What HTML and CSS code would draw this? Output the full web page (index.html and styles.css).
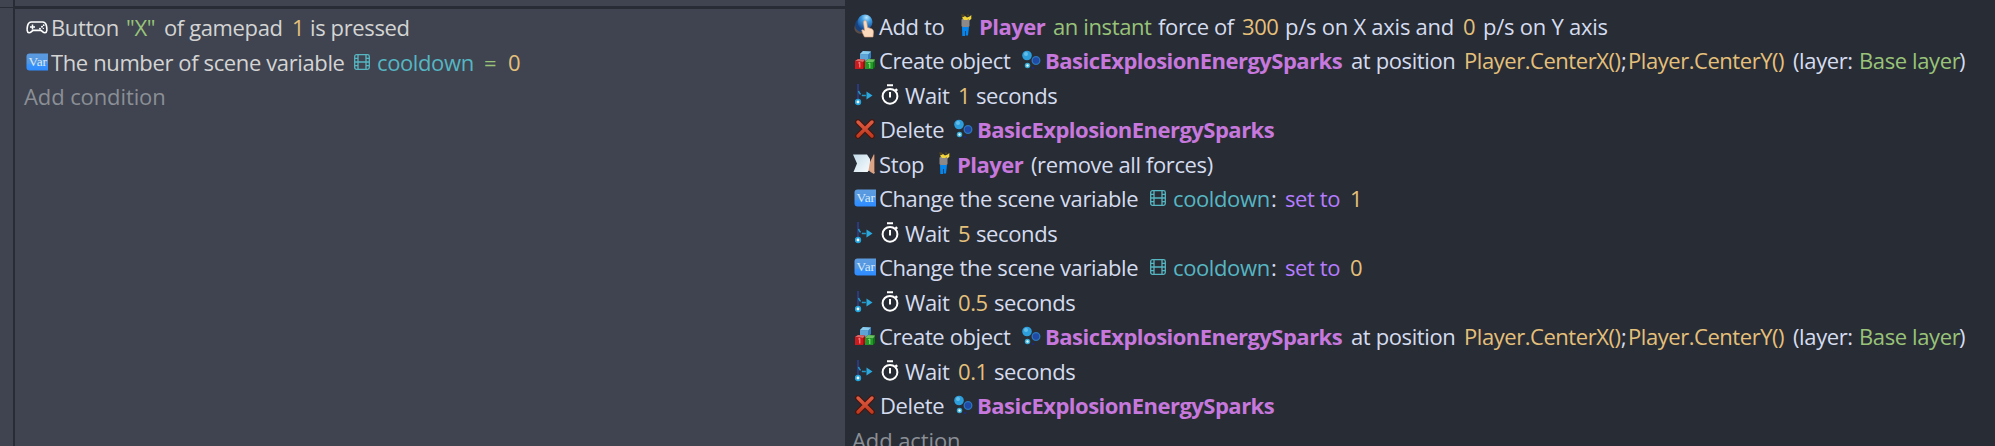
FILE: index.html
```
<!DOCTYPE html>
<html lang="en">
<head>
<meta charset="utf-8">
<title>Events sheet</title>
<link rel="stylesheet" href="styles.css">
</head>
<body>
<svg class="defs" aria-hidden="true">
  <defs>
    <linearGradient id="gVar" x1="0" y1="0" x2="0" y2="1"><stop offset="0" stop-color="#5b9be0"/><stop offset=".58" stop-color="#5296e2"/><stop offset=".65" stop-color="#3a93fa"/><stop offset="1" stop-color="#2f8cff"/></linearGradient>
    <radialGradient id="gBall" cx=".6" cy=".2" r=".8"><stop offset="0" stop-color="#b8e4fa"/><stop offset=".4" stop-color="#3f9be0"/><stop offset="1" stop-color="#154a94"/></radialGradient>
    <linearGradient id="gPage" x1="0" y1="0" x2="1" y2="1"><stop offset="0" stop-color="#c4dcea"/><stop offset="1" stop-color="#f7fbfd"/></linearGradient>
    <linearGradient id="gDel" x1="0" y1="0" x2="0" y2="1"><stop offset="0" stop-color="#dc5c43"/><stop offset="1" stop-color="#c23a20"/></linearGradient>
    <symbol id="pad" viewBox="0 0 22 13"><path d="M5.500 1h11c2.300 0 3.500 1.700 4 4 .6 3 .8 6.500-1.500 6.800-2 .2-2.800-2.400-4.500-2.400h-7c-1.700 0-2.500 2.600-4.500 2.400C.7 11.500.9 8 1.500 5 2 2.700 3.200 1 5.500 1Z" fill="none" stroke="#fff" stroke-width="1.600"/><path d="M6.500 3.500v5M4 6h5" stroke="#fff" stroke-width="1.500"/><circle cx="14" cy="7.700" r="1"/><circle cx="16" cy="5.700" r="1"/><circle cx="17.700" cy="4.200" r=".9"/><circle cx="17.300" cy="7.400" r=".7"/></symbol>
    <symbol id="var" viewBox="0 0 22 18"><path d="M3.500.5H22V17.500H3.500Q.5 17.500.5 14.500V3.500Q.5.5 3.500.5Z" fill="url(#gVar)"/><text x="2.500" y="13" class="var-text" textLength="18.500" lengthAdjust="spacingAndGlyphs">Var</text></symbol>
    <symbol id="film" viewBox="0 0 16 16"><rect x=".7" y=".7" width="14.600" height="14.600" rx="1.800"/><path d="M4 .7v14.600M12 .7v14.600M4 8h8M.7 4.300H4M.7 8H4M.7 11.700H4M12 4.300h3.300M12 8h3.300M12 11.700h3.300"/></symbol>
    <symbol id="touch" viewBox="0 0 20 24"><circle cx="6" cy="14" r="5.700" fill="#785d50" opacity=".65"/><circle cx="8" cy="11" r="7" fill="#17427c"/><circle cx="11" cy="8" r="7.500" fill="url(#gBall)"/><path d="M9.500 8.500q0-2 1.500-2t1.800 2l.7 5 4 1.200q2 .8 2 3L19 23h-8.500l-2-4-.8-3q1-.7 2.800.5Z" fill="#fbd9bd" stroke="#d8a17e" stroke-width=".6"/></symbol>
    <symbol id="cubes" viewBox="0 0 20 19"><path d="m5 3 3-3 8 .5V7l-3 3-8-1Z" fill="#347fb9"/><path d="m5 3 3-3 8 .5-3 3Z" fill="#8bccee"/><path d="m5 3 8 .5V10L5 9Z" fill="#5fa4d6"/><path d="m0 10 3-2 7 .5V16l-2 2H0Z" fill="#a90d12"/><path d="m0 10 3-2 7 .5L8 11Z" fill="#d96a69"/><path d="m0 10 8 1v7H0Z" fill="#c91a1d"/><path d="m3.300 12 1.500-.5v5" stroke="#ff9292" fill="none"/><path d="m10 11 3-3 7 .5V16l-2 2h-8Z" fill="#0b7611"/><path d="m10 11 3-3 7 .5-2 3Z" fill="#6abf63"/><path d="m10 11 8 .5V18h-8Z" fill="#25962a"/><path d="m13.300 12.500 1.500-.5v5" stroke="#8fe782" fill="none"/></symbol>
    <symbol id="async" viewBox="0 0 18 22"><path d="M3 0v15" stroke="#2b397f" stroke-width="2"/><path d="M3.500 7q1.500 4.500 5 4.500h4" fill="none" stroke="#2596c5" stroke-width="1.500" stroke-dasharray="4 1.500"/><path d="m11.500 7.500 6 4-6 4Z" fill="#2aa9de"/><circle cx="3" cy="18" r="2.300" fill="#fff" stroke="#22a4dc" stroke-width="1.800"/></symbol>
    <symbol id="timer" viewBox="0 0 18 21"><circle cx="9" cy="12.300" r="7.400" fill="none" stroke="#fff" stroke-width="2"/><path d="M6 1.200h6M14.500 5l1.800 1.700M9 8v5.500" fill="none" stroke="#fff" stroke-width="2"/></symbol>
    <symbol id="delete" viewBox="0 0 20 20"><path d="m3 3 14 14M17 3 3 17" stroke="#48150e" stroke-width="5.600" stroke-linecap="round"/><path d="m3 3 14 14M17 3 3 17" stroke="url(#gDel)" stroke-width="3.400" stroke-linecap="round"/></symbol>
    <symbol id="stop" viewBox="0 0 23 20"><path d="M0 .5h14l3 4.500v10l-2.500 3H.5L4 9.500Z" fill="url(#gPage)"/><path d="M17 8 21 0l1 3v15l-1 2-3.500-2-2-2Z" fill="#dca487"/><path d="M21.500 1v17" stroke="#80503e"/></symbol>
    <symbol id="player" viewBox="0 0 12 23"><rect x="1.500" y="4.500" width="8" height="8.500" rx="1.500" fill="#8c8988"/><path d="M2 3.500 5 2l2 1.500 2.500-1L11.300 1v4L9 6.500V5L7 6H4Z" fill="#f2d53b"/><path d="M1 .5h3l1 1.500-3 1ZM7 .5h2v1.200H7Z" fill="#54451c"/><path d="M2 13h7l-1 8.500H5.800V17h-.7v5H2.300Z" fill="#0486ee"/></symbol>
    <symbol id="sparks" viewBox="0 0 20 20"><circle cx="6" cy="5.500" r="4.800" fill="#2d9edc"/><circle cx="5" cy="4" r="2" fill="#62bee9"/><circle cx="15" cy="10.500" r="3.800" fill="#2149a6" stroke="#2a77bb" stroke-width="1.300"/><circle cx="6.500" cy="15.500" r="2" fill="#e4ffff" stroke="#37abd7" stroke-width="1.500"/><circle cx="12" cy="18" r="1.300" fill="#202a71"/></symbol>
  </defs>
</svg>
<main class="sheet">
  <aside class="gutter"><div class="gutter-top"></div></aside>
  <section class="conditions">
    <div class="row"><svg class="icon pad"><use href="#pad"/></svg><span class="t button">Button</span><span class="t str x">"X"</span><span class="t of-gamepad">of gamepad</span><span class="t num n1">1</span><span class="t">is pressed</span></div>
    <div class="row"><svg class="icon var"><use href="#var"/></svg><span class="t number-of">The number of scene variable</span><svg class="film"><use href="#film"/></svg><span class="t variable cond-var">cooldown</span><span class="t str eq">=</span><span class="t num">0</span></div>
    <div class="row add"><span class="t">Add condition</span></div>
  </section>
  <section class="actions">
    <div class="row"><svg class="icon touch"><use href="#touch"/></svg><span class="t add-to">Add to</span><svg class="player"><use href="#player"/></svg><span class="t obj player-name">Player</span><span class="t str instant">an instant</span><span class="t force">force of</span><span class="t num n300">300</span><span class="t on-x">p/s on X axis and</span><span class="t num n0">0</span><span class="t on-y">p/s on Y axis</span></div>
    <div class="row"><svg class="icon cubes"><use href="#cubes"/></svg><span class="t create">Create object</span><svg class="sparks"><use href="#sparks"/></svg><span class="t obj sparks-name">BasicExplosionEnergySparks</span><span class="t at">at position</span><span class="t num center">Player.CenterX()</span><span class="t semi">;</span><span class="t num center-y">Player.CenterY()</span><span class="t layer">(layer:</span><span class="t str base">Base layer</span><span class="t">)</span></div>
    <div class="row"><svg class="icon async"><use href="#async"/></svg><svg class="timer"><use href="#timer"/></svg><span class="t wait">Wait</span><span class="t num n1">1</span><span class="t seconds">seconds</span></div>
    <div class="row"><svg class="icon delete"><use href="#delete"/></svg><span class="t del">Delete</span><svg class="sparks"><use href="#sparks"/></svg><span class="t obj sparks-name">BasicExplosionEnergySparks</span></div>
    <div class="row"><svg class="icon stop"><use href="#stop"/></svg><span class="t stop-name">Stop</span><svg class="player"><use href="#player"/></svg><span class="t obj player-name">Player</span><span class="t remove">(remove all forces)</span></div>
    <div class="row"><svg class="icon var"><use href="#var"/></svg><span class="t change">Change the scene variable</span><svg class="film"><use href="#film"/></svg><span class="t variable act-var">cooldown</span><span class="t colon">:</span><span class="t op">set to</span><span class="t num">1</span></div>
    <div class="row"><svg class="icon async"><use href="#async"/></svg><svg class="timer"><use href="#timer"/></svg><span class="t wait">Wait</span><span class="t num n1">5</span><span class="t seconds">seconds</span></div>
    <div class="row"><svg class="icon var"><use href="#var"/></svg><span class="t change">Change the scene variable</span><svg class="film"><use href="#film"/></svg><span class="t variable act-var">cooldown</span><span class="t colon">:</span><span class="t op">set to</span><span class="t num">0</span></div>
    <div class="row"><svg class="icon async"><use href="#async"/></svg><svg class="timer"><use href="#timer"/></svg><span class="t wait">Wait</span><span class="t num decimal">0.5</span><span class="t seconds">seconds</span></div>
    <div class="row"><svg class="icon cubes"><use href="#cubes"/></svg><span class="t create">Create object</span><svg class="sparks"><use href="#sparks"/></svg><span class="t obj sparks-name">BasicExplosionEnergySparks</span><span class="t at">at position</span><span class="t num center">Player.CenterX()</span><span class="t semi">;</span><span class="t num center-y">Player.CenterY()</span><span class="t layer">(layer:</span><span class="t str base">Base layer</span><span class="t">)</span></div>
    <div class="row"><svg class="icon async"><use href="#async"/></svg><svg class="timer"><use href="#timer"/></svg><span class="t wait">Wait</span><span class="t num decimal">0.1</span><span class="t seconds">seconds</span></div>
    <div class="row"><svg class="icon delete"><use href="#delete"/></svg><span class="t del">Delete</span><svg class="sparks"><use href="#sparks"/></svg><span class="t obj sparks-name">BasicExplosionEnergySparks</span></div>
    <div class="row add"><span class="t">Add action</span></div>
  </section>
</main>
</body>
</html>
```
FILE: styles.css
```
* { box-sizing: border-box; }
body { margin: 0; overflow: hidden; background: #282c34; }
.defs { position: absolute; width: 0; height: 0; }
.sheet {
  display: grid;
  grid-template-columns: 15px 830px 1fr;
  height: 446px;
  overflow: hidden;
  font: 22px/34.5px "Open Sans", "Noto Sans", sans-serif;
  letter-spacing: -0.38px;
  color: #d4d4d4;
}
.gutter { background: #3f4450; border-right: 2px solid #282c34; }
.gutter-top { height: 8px; border-bottom: 1px solid #282c34; }
.conditions {
  background: linear-gradient(#3f4450 0 6px, #282c34 6px 9px, #3f4450 9px);
  padding: 10px 0 0 9px;
}
.actions {
  padding: 8.5px 0 0 7px;
  color: #d5dcef;
  background: #282c34;
}
.row { display: flex; align-items: center; height: 34.5px; white-space: nowrap; }
.row > * { flex: none; }
.row.add { color: #8b8f96; letter-spacing: -0.1px; }
.icon { margin-left: 2px; margin-right: 3px; width: 22px; height: 18px; }
.pad { height: 13px; fill: #fff; }
.var-text { font: 11.5px "Liberation Serif", serif; fill: #d8eafa; letter-spacing: 0; }
.actions .icon { margin-left: 1px; margin-right: 4px; }
.actions .touch { width: 20px; height: 24px; margin: 0 5px 0 2px; }
.actions .cubes { width: 20px; height: 19px; margin: 0 4px 0 3px; }
.actions .async { width: 18px; height: 22px; margin: 0 8px 0 3px; }
.actions .delete { width: 20px; height: 20px; margin: 0 5px 0 3px; }
.actions .stop { width: 23px; height: 20px; margin: 0 3px 0 1px; }
.actions .var { margin: 0 3px 0 2px; }
.timer { width: 18px; height: 21px; margin-right: 6px; }
.player { width: 12px; height: 23px; margin-right: 7px; }
.sparks { width: 20px; height: 20px; margin-right: 4px; }
.film { width: 16px; height: 16px; margin-right: 7px; fill: none; stroke: #56b6c2; stroke-width: 1.3; }
.num { color: #e5c07b; letter-spacing: -0.45px; }
.str { color: #98c379; }
.variable { color: #56b6c2; }
.op { color: #b57cff; width: 65px; }
.obj { color: #c678dd; font-weight: 700; letter-spacing: -0.52px; }

.button { width: 75px; }
.x { width: 38px; }
.of-gamepad { width: 128px; }
.n1 { width: 18px; }
.number-of { width: 303px; }
.cond-var { width: 107px; }
.eq { width: 24px; }
.add-to { width: 81px; }
.player-name { width: 74px; }
.instant { width: 105px; }
.force { width: 84px; }
.n300 { width: 43px; }
.on-x { width: 178px; letter-spacing: -0.25px; }
.n0 { width: 20px; }
.on-y { letter-spacing: -0.25px; }
.create { width: 142px; }
.sparks-name { width: 306px; }
.at { width: 113px; }
.center { width: 157px; }
.semi { width: 7px; }
.center-y { width: 165px; }
.layer { width: 66px; }
.base { width: 100px; }
.wait { width: 53px; }
.decimal { width: 36px; }
.del { width: 73px; }
.stop-name { width: 59px; }
.change { width: 271px; }
.act-var { width: 98px; }
.colon { width: 14px; }
```
